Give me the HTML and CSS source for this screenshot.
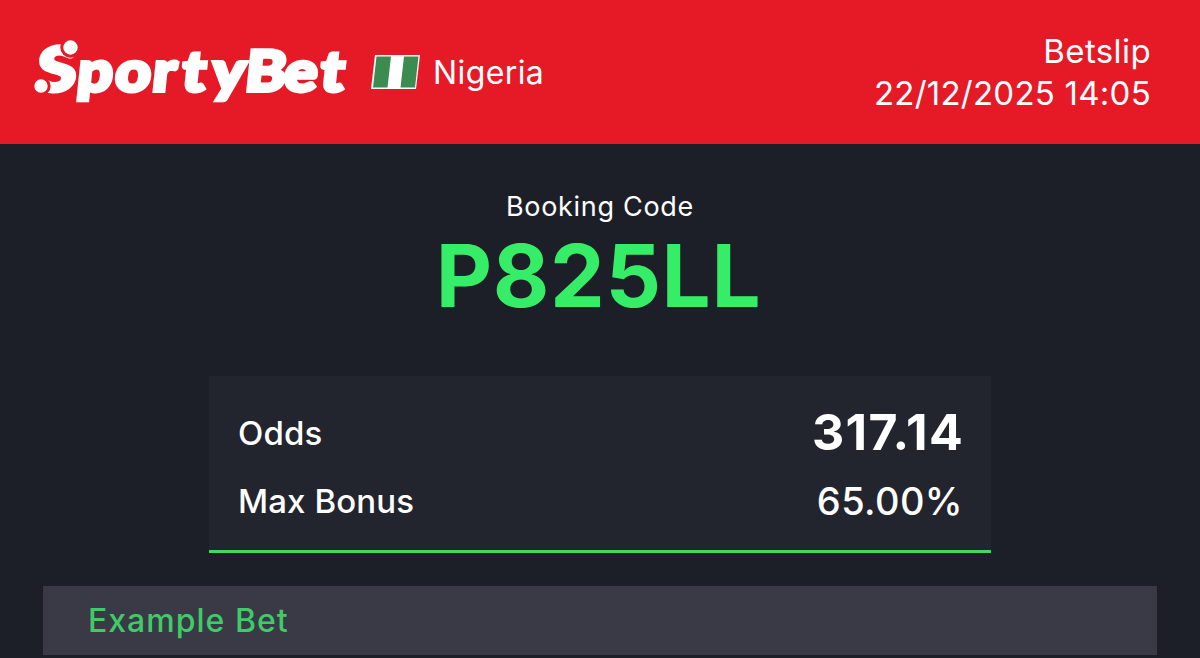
FILE: index.html
```html
<!DOCTYPE html>
<html lang="en">
<head>
    <meta charset="UTF-8">
    <meta name="viewport" content="width=device-width, initial-scale=1.0">
    <title>SportyBet Betslip</title>
    <link rel="stylesheet" href="styles.css">
</head>
<body>
    <header class="header">
        <div class="brand">
            <svg class="logo" width="320" height="104" viewBox="30 20 320 104" role="img" aria-label="SportyBet">
                <g class="logo-text" transform="translate(0 90.5) skewX(-6) scale(1.1 1)">
                    <text class="logo-s" transform="translate(31.5 0) scale(1.08 1)">S</text>
                    <text x="69 103.5 137.5 164 191.5 221.5 257 290" y="0">portyBet</text>
                </g>
                <g class="logo-dots">
                    <circle cx="70.5" cy="47.5" r="8.7"/>
                    <circle cx="41" cy="86" r="8.2"/>
                </g>
            </svg>
            <svg class="flag" width="50" height="36" viewBox="0 0 50 36">
                <path d="M4 1H49L45 35H0Z" fill="#fff"/>
                <path d="M5.5 2.5H20L16.5 33.5H2Z" fill="#3c8b50"/>
                <path d="M33 2.5H47.5L44 33.5H29.5Z" fill="#3c8b50"/>
            </svg>
            <span class="country">Nigeria</span>
        </div>
        <div class="info">
            <span class="info-title">Betslip</span>
            <span class="info-date">22/12/2025 14:05</span>
        </div>
    </header>

    <main>
        <section class="booking">
            <p class="booking-label">Booking Code</p>
            <h1 class="booking-code">P825LL</h1>
        </section>

        <section class="summary">
            <div class="row">
                <span class="label">Odds</span>
                <span class="odds">317.14</span>
            </div>
            <div class="row">
                <span class="label">Max Bonus</span>
                <span class="bonus">65.00%</span>
            </div>
        </section>

        <section class="bet">
            <h2 class="bet-title">Example Bet</h2>
        </section>
    </main>
</body>
</html>
```
FILE: styles.css
```css
* {
    box-sizing: border-box;
    margin: 0;
}

body {
    height: 658px;
    overflow: hidden;
    background-color: #1c1f27;
    color: #fff;
    font-family: "Inter", sans-serif;
}

/* red bar */
.header {
    display: flex;
    justify-content: space-between;
    height: 144px;
    padding: 29px 49px 0 30px;
    background-color: #e61a27;
}

.brand {
    display: flex;
    align-items: center;
    height: 86px;
}

.logo-text {
    fill: #fff;
    stroke: #fff;
    stroke-width: 4px;
    font-family: "Lato", sans-serif;
    font-size: 56px;
    font-weight: 900;
}

.logo-s {
    font-size: 61px;
}

/* the red ring separates the dots from the S */
.logo-dots {
    fill: #fff;
    stroke: #e61a27;
    stroke-width: 3px;
}

.flag {
    margin-left: 21px;
}

.country {
    margin-left: 12px;
    padding-top: 2px;
    font-size: 32px;
    line-height: 40px;
    letter-spacing: 0.4px;
}

.info {
    display: flex;
    flex-direction: column;
    align-items: flex-end;
    padding-top: 1px;
    font-size: 33px;
    line-height: 42px;
}

.info-title {
    letter-spacing: 0.4px;
}

.info-date {
    letter-spacing: 0.25px;
}

.booking {
    height: 232px;
    padding-top: 46px;
    text-align: center;
}

.booking-label {
    font-size: 27px;
    line-height: 34px;
    letter-spacing: 0.7px;
}

.booking-code {
    padding-right: 3px;
    color: #36ed68;
    font-size: 87px;
    font-weight: 700;
    line-height: 104px;
    letter-spacing: 0.6px;
}

.summary {
    width: 782px;
    height: 177px;
    margin: 0 auto 33px 209px;
    padding: 23px 29px 0;
    background-color: #23252e;
    border-bottom: 3px solid #42d764;
}

.row {
    display: flex;
    justify-content: space-between;
    align-items: center;
    height: 68px;
}

.label {
    font-size: 33px;
    font-weight: 500;
    letter-spacing: 0.1px;
}

.odds {
    margin: -2px -2px 0 0;
    font-size: 50px;
    font-weight: 700;
    letter-spacing: 1.3px;
}

.bonus {
    margin-right: -1px;
    font-size: 38px;
    font-weight: 500;
    letter-spacing: 0.4px;
}

.bet {
    height: 69px;
    margin: 0 43px;
    padding-left: 45px;
    background-color: #393a45;
}

.bet-title {
    color: #40ca68;
    font-size: 32px;
    font-weight: 500;
    line-height: 69px;
    letter-spacing: 1px;
}
```
